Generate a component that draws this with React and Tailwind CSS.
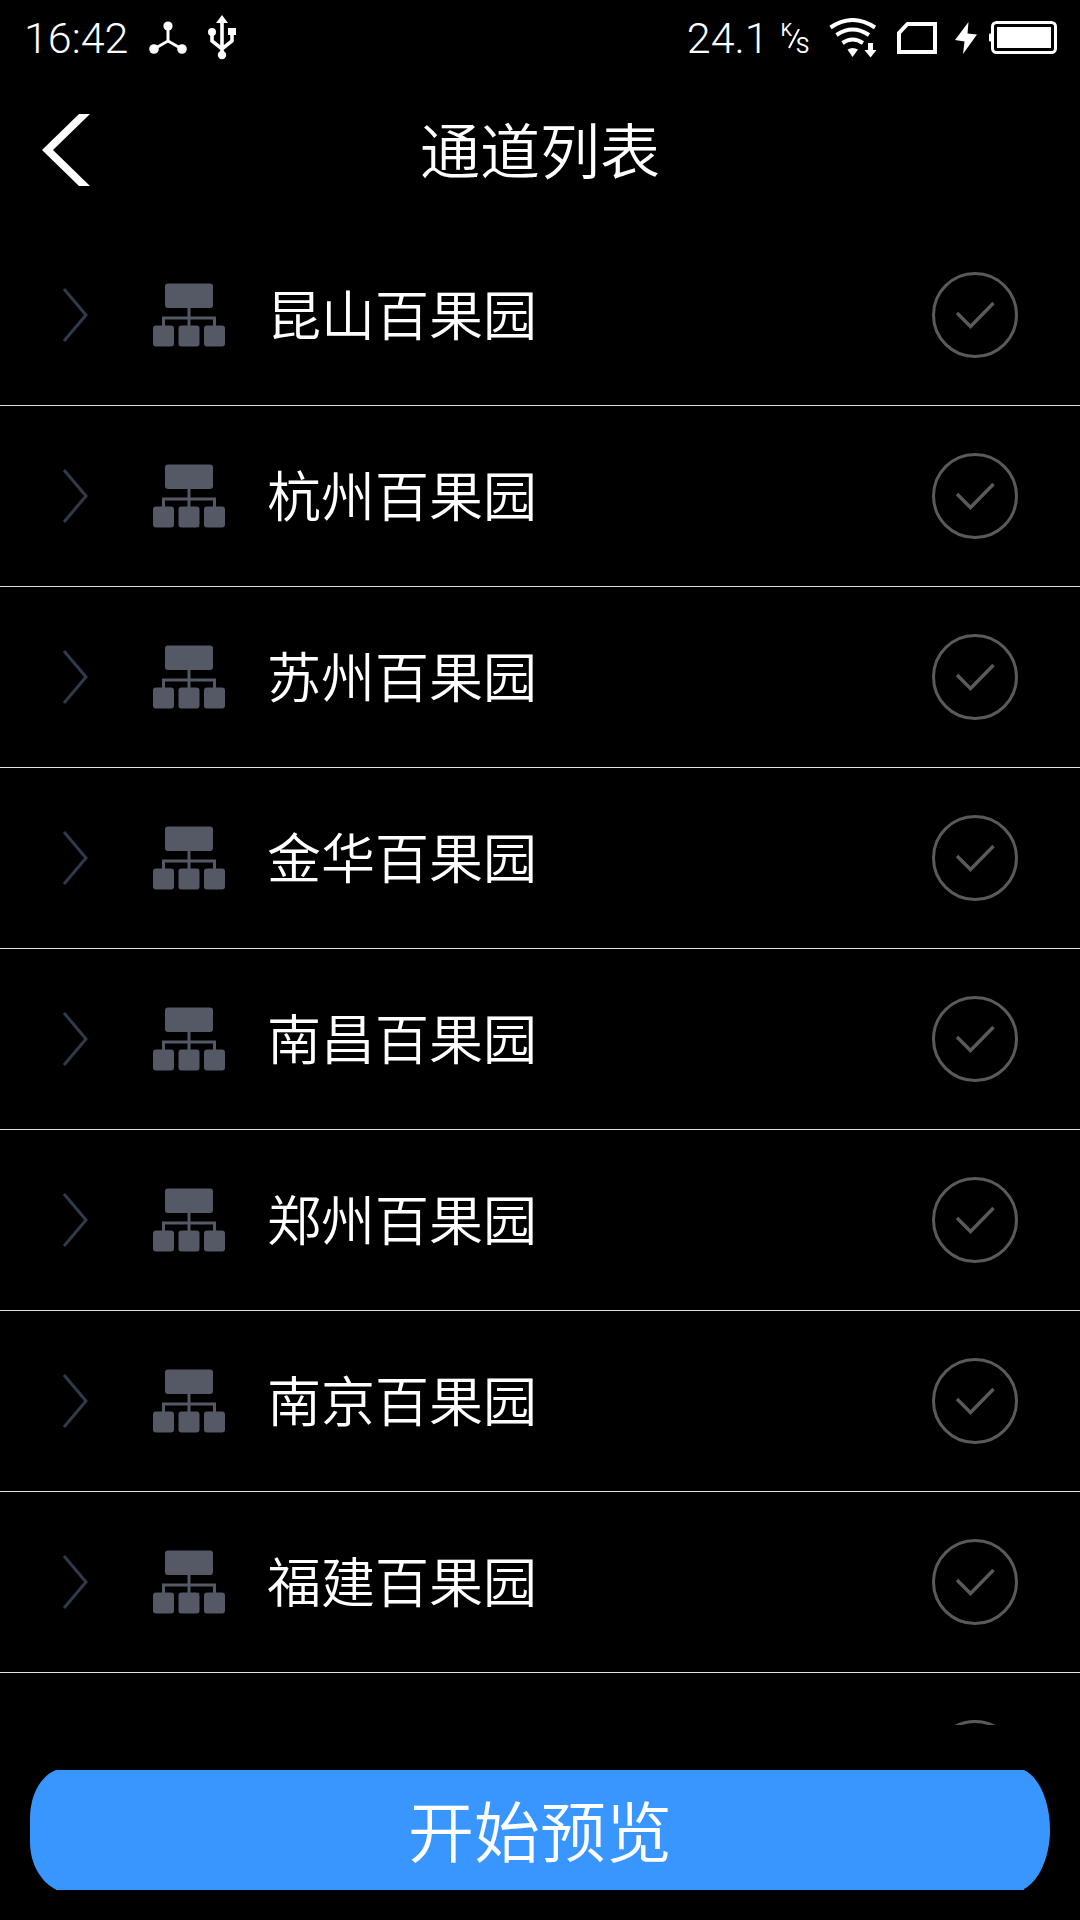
import React, { useState } from "react";

const channels = [
  "昆山百果园",
  "杭州百果园",
  "苏州百果园",
  "金华百果园",
  "南昌百果园",
  "郑州百果园",
  "南京百果园",
  "福建百果园",
  "",
];

const HubIcon = () => (
  <svg className="h-[34px] w-[38px]" viewBox="0 0 38 34" fill="white">
    <path d="M19 5V20L5 28M19 20L33 28" fill="none" stroke="white" strokeWidth="3" />
    <circle cx="19" cy="5" r="4.6" />
    <circle cx="5" cy="28" r="4.8" />
    <circle cx="33" cy="28" r="4.8" />
  </svg>
);

const UsbIcon = () => (
  <svg className="h-[46px] w-[28px]" viewBox="0 0 28 46" fill="white">
    <path d="M14 0L20 8H8Z" />
    <path
      d="M14 6V38M4 16V26L14 34L24 26V16"
      fill="none"
      stroke="white"
      strokeWidth="3.6"
    />
    <circle cx="4" cy="17" r="4" />
    <rect x="20" y="13" width="8" height="7" />
    <circle cx="14" cy="40" r="4.2" />
  </svg>
);

const WifiIcon = () => (
  <svg className="h-[40px] w-[48px]" viewBox="0 0 48 40" fill="white">
    <g fill="none" stroke="white" strokeWidth="4">
      <path d="M1.5 9.5Q23.5 -5.5 46 9.5" />
      <path d="M7.5 17Q23.5 6 40 17" />
      <path d="M13.5 25Q23.5 18 34 25" />
    </g>
    <path d="M18.5 31.5Q23.5 28.5 29 31.5L23.5 39Z" />
    <path d="M39 25H44V32H47.5L41.5 39.5L35.5 32H39Z" />
  </svg>
);

const SimIcon = () => (
  <svg className="h-[32px] w-[40px]" viewBox="0 0 40 32">
    <path
      d="M10.5 2H38V30H2V11Z"
      fill="none"
      stroke="white"
      strokeWidth="4"
    />
  </svg>
);

const BoltIcon = () => (
  <svg className="h-[32px] w-[22px]" viewBox="0 0 22 32" fill="white">
    <path d="M13.5 0L0 18L9.5 19.5L8 32L22 12.5L12.5 11.5Z" />
  </svg>
);

const BatteryIcon = () => (
  <svg className="h-[33px] w-[68px]" viewBox="0 0 68 33" fill="white">
    <rect x="0" y="12.5" width="3" height="8" rx="1" />
    <rect
      x="3.5"
      y="1.5"
      width="63"
      height="30"
      rx="4"
      fill="none"
      stroke="white"
      strokeWidth="3"
    />
    <rect x="8" y="6" width="54" height="21" />
  </svg>
);

const OrgIcon = () => (
  <svg className="h-[64px] w-[72px] shrink-0" viewBox="0 0 72 64" fill="#555966">
    <rect x="12" y="0.5" width="48" height="24.5" rx="3" />
    <path
      d="M36 24V44M10.5 44V35H61.5V44"
      fill="none"
      stroke="#555966"
      strokeWidth="3"
    />
    <rect x="0" y="42.5" width="21" height="21" rx="3" />
    <rect x="25.5" y="42.5" width="21" height="21" rx="3" />
    <rect x="51" y="42.5" width="21" height="21" rx="3" />
  </svg>
);

const StatusBar = () => (
  <div className="flex h-[75px] shrink-0 items-center justify-between pl-6 pr-[23px] font-['Roboto',sans-serif] text-[43px] font-[350] leading-[48px]">
    <div className="flex items-center">
      <span>16:42</span>
      <div className="ml-[21px] flex items-center gap-[21px]">
        <HubIcon />
        <UsbIcon />
      </div>
    </div>
    <div className="flex items-center gap-5">
      <div className="flex items-center gap-3">
        <span>24.1</span>
        <span className="flex h-8 font-normal leading-4">
          <span className="text-[18px]">K</span>
          <svg className="-mx-1 mt-[7px] h-[20px] w-[12px]" viewBox="0 0 12 20">
            <path d="M11 0L1 19" stroke="white" strokeWidth="2" />
          </svg>
          <span className="self-end text-[22px]">S</span>
        </span>
      </div>
      <WifiIcon />
      <div className="flex items-center gap-[18px]">
        <SimIcon />
        <BoltIcon />
      </div>
      <div className="-ml-2 flex">
        <BatteryIcon />
      </div>
    </div>
  </div>
);

const ChannelRow = ({ id, name, checked, onToggle }) => {
  return (
    <li className="flex h-[181px] shrink-0 items-center border-b border-[#e0e0e0] pl-[60px] pr-[62px]">
      <button type="button" aria-label={name} className="mr-[63px] shrink-0 cursor-pointer">
        <svg className="h-[54px] w-[30px]" viewBox="0 0 30 54">
          <path
            d="M4 1L26 27L4 53"
            fill="none"
            stroke="#2f3b4c"
            strokeWidth="3"
          />
        </svg>
      </button>
      <OrgIcon />
      <label htmlFor={id} className="ml-[42px] flex-1 truncate pb-1 text-[54px] leading-[80px]">
        {name}
      </label>
      <div className="relative size-[86px] shrink-0">
        <input
          id={id}
          type="checkbox"
          checked={checked}
          onChange={onToggle}
          className="block size-full cursor-pointer appearance-none rounded-full border-3 border-[#5a5a5a] checked:border-[#3996ff]"
        />
        <svg
          className={`pointer-events-none absolute inset-0 ${
            checked ? "text-[#3996ff]" : "text-[#5a5a5a]"
          }`}
          viewBox="0 0 86 86"
        >
          <path
            d="M25 41L38.5 54.5L61.5 31"
            fill="none"
            stroke="currentColor"
            strokeWidth="3.4"
          />
        </svg>
      </div>
    </li>
  );
};

const App = () => {
  const [selected, setSelected] = useState([]);

  const toggle = (index) => {
    if (selected.includes(index)) {
      setSelected(selected.filter((i) => i !== index));
    } else {
      setSelected([...selected, index]);
    }
  };

  return (
    <div className="flex h-screen flex-col bg-black font-['Noto_Sans_CJK_SC',sans-serif] font-[350] text-white">
      <StatusBar />

      <header className="grid h-[150px] shrink-0 grid-cols-[1fr_auto_1fr] items-center px-[42px]">
        <button type="button" aria-label="返回" className="w-12 cursor-pointer">
          <svg className="h-[72px] w-[48px]" viewBox="0 0 48 72" fill="white">
            <path d="M37 0H48L11 36L48 72H37L0 36Z" />
          </svg>
        </button>
        <h1 className="pb-1 text-[60px] leading-[88px]">通道列表</h1>
      </header>

      <ul className="flex min-h-0 flex-1 flex-col overflow-hidden">
        {channels.map((name, index) => (
          <ChannelRow
            key={index}
            id={`channel-${index}`}
            name={name}
            checked={selected.includes(index)}
            onToggle={() => toggle(index)}
          />
        ))}
      </ul>

      <div className="px-[30px] pb-[30px] pt-[45px]">
        <button
          type="button"
          className="flex h-[120px] w-full cursor-pointer items-stretch text-[66px] leading-[96px]"
        >
          <svg className="h-[120px] w-[26px]" viewBox="0 0 26 120" fill="#3996ff">
            <path d="M26 0C12 5 0 24 0 48V72C0 96 13 114 27 120Z" />
          </svg>
          <span className="flex flex-1 items-center justify-center bg-[#3996ff] pb-1">
            开始预览
          </span>
          <svg className="h-[120px] w-[26px]" viewBox="0 0 26 120" fill="#3996ff">
            <path d="M0 0C14 6 26 30 26 60C26 88 14 112 0 119Z" />
          </svg>
        </button>
      </div>
    </div>
  );
};

export default App;
